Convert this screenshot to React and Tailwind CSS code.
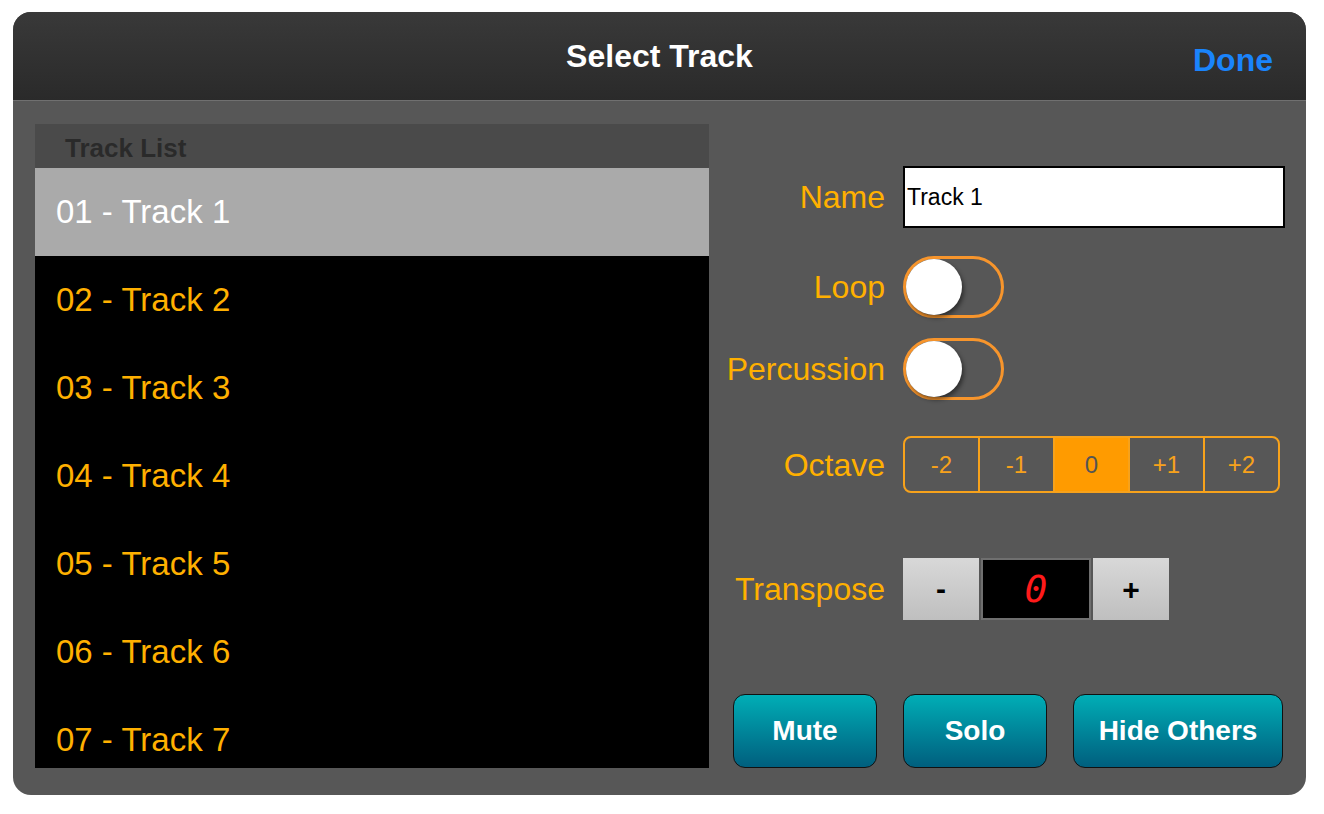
import { useState } from 'react';

const tracks = ['01 - Track 1', '02 - Track 2', '03 - Track 3', '04 - Track 4', '05 - Track 5', '06 - Track 6', '07 - Track 7'];
const octaves = ['-2', '-1', '0', '+1', '+2'];

function Toggle() {
  return (
    <div className="w-[101px] h-[62px] rounded-full border-[3px] border-[#f7952c] flex items-center">
      <div className="w-[56px] h-[56px] rounded-full bg-white shadow-[2px_3px_4px_rgba(0,0,0,0.45)]"></div>
    </div>
  );
}

function Label({ children }) {
  return (
    <div className="w-[176px] shrink-0 text-right text-[32px] text-[#ffb000] leading-none whitespace-nowrap">{children}</div>
  );
}

export default function App() {
  const [selected] = useState(0);
  const [octave] = useState('0');

  return (
    <div className="w-[1324px] h-[814px] bg-white pt-[12px] pl-[13px]" style={{ fontFamily: '"Liberation Sans", Arial, sans-serif' }}>
      <div className="w-[1293px] h-[783px] rounded-[18px] overflow-hidden bg-[#575757] flex flex-col">
        {/* header */}
        <div className="h-[89px] shrink-0 bg-gradient-to-b from-[#393939] to-[#2a2a2a] border-b border-[#707070] flex items-center relative">
          <div className="flex-1 text-center text-white font-bold text-[32px]">Select Track</div>
          <div className="absolute right-[33px] top-[24px] text-[32px] font-bold text-[#1a84fc]">Done</div>
        </div>

        <div className="flex flex-1">
          {/* track list */}
          <div className="ml-[22px] mt-[23px] w-[674px] h-[644px] bg-black flex flex-col overflow-hidden">
            <div className="h-[44px] shrink-0 bg-[#4a4a4a] flex items-end pl-[30px] pb-[7px]">
              <span className="text-[26px] font-bold text-[#2a2a2a] leading-none">Track List</span>
            </div>
            {tracks.map((t, i) => (
              <div
                key={t}
                className={`h-[88px] shrink-0 flex items-center pl-[21px] text-[33px] ${i === selected ? 'bg-[#aaaaaa] text-white' : 'text-[#ffb000]'}`}
              >
                {t}
              </div>
            ))}
          </div>

          {/* settings */}
          <div className="flex-1 flex flex-col">
            <div className="flex items-center gap-[18px] mt-[65px] h-[62px]">
              <Label>Name</Label>
              <div className="w-[382px] h-[62px] bg-white border-2 border-black flex items-center pl-[2px] text-[23px] text-black">Track 1</div>
            </div>
            <div className="flex items-center gap-[18px] mt-[28px] h-[62px]">
              <Label>Loop</Label>
              <Toggle />
            </div>
            <div className="flex items-center gap-[18px] mt-[20px] h-[62px]">
              <Label>Percussion</Label>
              <Toggle />
            </div>
            <div className="flex items-center gap-[18px] mt-[36px] h-[57px]">
              <Label>Octave</Label>
              <div className="w-[377px] h-[57px] rounded-[8px] border-2 border-[#f7a21b] flex overflow-hidden">
                {octaves.map((o, i) => (
                  <div
                    key={o}
                    className={`flex-1 flex items-center justify-center text-[24px] ${i > 0 ? 'border-l-2 border-[#f7a21b]' : ''} ${o === octave ? 'bg-[#ff9b00] text-[#555555]' : 'text-[#f7a21b]'}`}
                  >
                    {o}
                  </div>
                ))}
              </div>
            </div>
            <div className="flex items-center gap-[18px] mt-[65px] h-[62px]">
              <Label>Transpose</Label>
              <div className="flex gap-[2px] h-[62px]">
                <div className="w-[76px] bg-gradient-to-b from-[#d8d8d8] to-[#bfbfbf] flex items-center justify-center text-[30px] font-bold text-black pb-[2px]">-</div>
                <div className="w-[110px] bg-black border-2 border-[#6f6f6f] flex items-center justify-center">
                  <span className="text-[38px] italic text-[#ff1a1a] leading-none" style={{ fontFamily: '"DejaVu Sans Mono", monospace' }}>0</span>
                </div>
                <div className="w-[76px] bg-gradient-to-b from-[#d8d8d8] to-[#bfbfbf] flex items-center justify-center text-[30px] font-bold text-black">+</div>
              </div>
            </div>
            <div className="flex mt-[74px] pl-[24px] gap-[26px]">
              <button className="w-[144px] h-[74px] rounded-[12px] border border-[#111] bg-gradient-to-b from-[#00aeb6] to-[#005f7e] text-white font-bold text-[28px]">Mute</button>
              <button className="w-[144px] h-[74px] rounded-[12px] border border-[#111] bg-gradient-to-b from-[#00aeb6] to-[#005f7e] text-white font-bold text-[28px]">Solo</button>
              <button className="w-[210px] h-[74px] rounded-[12px] border border-[#111] bg-gradient-to-b from-[#00aeb6] to-[#005f7e] text-white font-bold text-[28px]">Hide Others</button>
            </div>
          </div>
        </div>
      </div>
    </div>
  );
}
